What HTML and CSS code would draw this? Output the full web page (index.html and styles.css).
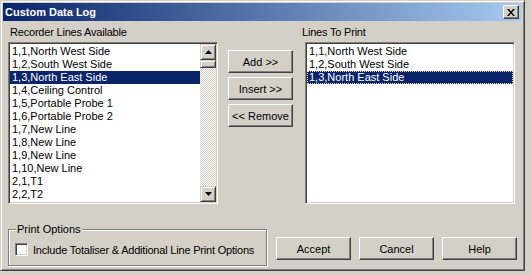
FILE: index.html
```html
<!DOCTYPE html>
<html>
<head>
<title>Custom Data Log</title>
<link rel="stylesheet" href="styles.css">
</head>
<body>

<div class="window">
  <div class="titlebar">
    <span class="title">Custom Data Log</span>
    <span class="close">
      <svg width="8" height="7" viewBox="0 0 8 7"><path d="M0 0h2l2 2.5L6 0h2L5 3.5 8 7H6L4 4.5 2 7H0l3-3.5z" fill="#000"/></svg>
    </span>
  </div>

  <div class="content">
    <div class="lists">
      <div class="label">Recorder Lines Available</div>
      <div></div>
      <div class="label label-right">Lines To Print</div>

      <div class="listbox">
        <ul class="items">
          <li>1,1,North West Side</li>
          <li>1,2,South West Side</li>
          <li class="selected">1,3,North East Side</li>
          <li>1,4,Ceiling Control</li>
          <li>1,5,Portable Probe 1</li>
          <li>1,6,Portable Probe 2</li>
          <li>1,7,New Line</li>
          <li>1,8,New Line</li>
          <li>1,9,New Line</li>
          <li>1,10,New Line</li>
          <li>2,1,T1</li>
          <li>2,2,T2</li>
        </ul>
        <div class="scrollbar">
          <span class="sb-button">
            <svg width="7" height="4" viewBox="0 0 7 4"><path d="M3.5 0L7 4H0z" fill="#000"/></svg>
          </span>
          <span class="sb-thumb"></span>
          <span class="sb-track"></span>
          <span class="sb-button">
            <svg width="7" height="4" viewBox="0 0 7 4"><path d="M0 0h7L3.5 4z" fill="#000"/></svg>
          </span>
        </div>
      </div>

      <div class="move-buttons">
        <button class="btn">Add &gt;&gt;</button>
        <button class="btn">Insert &gt;&gt;</button>
        <button class="btn">&lt;&lt; Remove</button>
      </div>

      <div class="listbox">
        <ul class="items">
          <li>1,1,North West Side</li>
          <li>1,2,South West Side</li>
          <li class="selected focused">1,3,North East Side</li>
        </ul>
      </div>
    </div>

    <div class="footer">
      <div class="group">
        <span class="legend">Print Options</span>
        <div class="check">
          <span class="checkbox"></span>
          <span>Include Totaliser &amp; Additional Line Print Options</span>
        </div>
      </div>
      <div class="actions">
        <button class="btn btn-wide">Accept</button>
        <button class="btn btn-wide">Cancel</button>
        <button class="btn btn-wide">Help</button>
      </div>
    </div>
  </div>
</div>

</body>
</html>
```

FILE: styles.css
```css
body {
  margin: 0;
  background: #d4d0c8;
  font-family: "Liberation Sans", Arial, sans-serif;
  font-size: 11px;
  color: #000;
}

/* window frame */
.window {
  width: 525px;
  height: 271px;
  box-sizing: border-box;
  padding: 2px 3px 2px 2px;
  border: 1px solid;
  border-color: #d4d0c8 #404040 #404040 #d4d0c8;
  box-shadow: inset 1px 1px #fff, inset -1px -1px #808080;
  background: #d4d0c8;
}

.titlebar {
  height: 18px;
  display: flex;
  align-items: center;
  justify-content: space-between;
  background: linear-gradient(to right, #0a246a, #a6caf0);
}

.title {
  padding-left: 2px;
  color: #fff;
  font-weight: bold;
  font-size: 11px;
}

.close {
  width: 16px;
  height: 14px;
  margin-right: 2px;
  box-sizing: border-box;
  display: flex;
  align-items: center;
  justify-content: center;
  background: #d4d0c8;
  border: 1px solid;
  border-color: #fff #404040 #404040 #fff;
  box-shadow: inset -1px -1px #808080;
}

.content {
  padding: 5px 0 0 5px;
}

/* list area */
.lists {
  display: grid;
  grid-template-columns: 210px auto 210px;
  justify-content: start;
  align-items: start;
}

.label {
  height: 13px;
  line-height: 13px;
  margin: 0 0 3px 2px;
  letter-spacing: -0.2px;
}

.label-right {
  margin-left: -3px;
}

.listbox {
  height: 162px;
  box-sizing: border-box;
  display: flex;
  background: #fff;
  border: 1px solid;
  border-color: #808080 #fff #fff #808080;
  box-shadow: inset 1px 1px #404040, inset -1px -1px #d4d0c8;
  padding: 1px;
}

.items {
  flex: 1;
  list-style: none;
  margin: 0;
  padding: 1px 0 0 0;
}

.items li {
  height: 13px;
  line-height: 13px;
  padding-left: 2px;
  white-space: nowrap;
}

.items li.selected {
  background: #0a246a;
  color: #fff;
}

.items li.focused {
  outline: 1px dotted #f5db95;
  outline-offset: -1px;
}

.scrollbar {
  width: 16px;
  display: flex;
  flex-direction: column;
}

.sb-button, .sb-thumb {
  box-sizing: border-box;
  background: #d4d0c8;
  border: 1px solid;
  border-color: #d4d0c8 #404040 #404040 #d4d0c8;
  box-shadow: inset 1px 1px #fff, inset -1px -1px #808080;
}

.sb-button {
  height: 16px;
  display: flex;
  align-items: center;
  justify-content: center;
}

.sb-thumb {
  height: 8px;
}

.sb-track {
  flex: 1;
  background: repeating-conic-gradient(#fff 0 25%, #d4d0c8 0 50%) 0 0 / 2px 2px;
}

/* buttons */
.move-buttons {
  display: flex;
  flex-direction: column;
  gap: 4px;
  margin: 8px 12px 0 10px;
}

.btn {
  width: 65px;
  height: 23px;
  padding: 0;
  font-family: inherit;
  font-size: 11px;
  color: #000;
  background: #d4d0c8;
  border: 1px solid;
  border-color: #fff #404040 #404040 #fff;
  box-shadow: inset -1px -1px #808080;
}

.btn-wide {
  width: 75px;
}

/* footer */
.footer {
  display: flex;
  align-items: flex-start;
  margin-top: 25px;
}

.group {
  position: relative;
  width: 259px;
  height: 37px;
  box-sizing: border-box;
  border: 1px solid #808080;
  box-shadow: 1px 1px #fff, inset 1px 1px #fff;
  padding: 13px 0 0 6px;
}

.legend {
  position: absolute;
  top: -7px;
  left: 7px;
  padding: 0 1px;
  line-height: 13px;
  background: #d4d0c8;
}

.check {
  display: flex;
  align-items: center;
  gap: 5px;
  letter-spacing: -0.2px;
}

.checkbox {
  width: 13px;
  height: 13px;
  box-sizing: border-box;
  background: #fff;
  border: 1px solid;
  border-color: #808080 #fff #fff #808080;
  box-shadow: inset 1px 1px #404040, inset -1px -1px #d4d0c8;
}

.actions {
  display: flex;
  gap: 8px;
  margin: 8px 0 0 9px;
}
```
